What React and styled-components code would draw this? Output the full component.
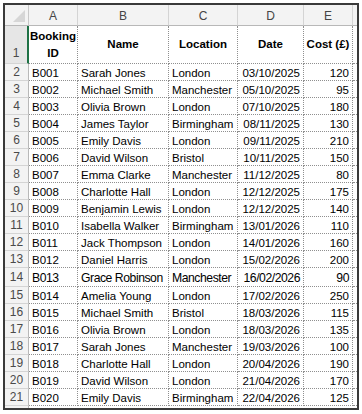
import React from "react";
import styled, { createGlobalStyle } from "styled-components";

const GlobalStyle = createGlobalStyle`
  html, body { margin: 0; padding: 0; background: #ffffff; }
  body { font-family: "Liberation Sans", Arial, sans-serif; }
`;

const COLS = "24px 49px 91px 69px 66px 49px 1fr";

const Frame = styled.div`
  margin: 3px;
  width: 356px;
  height: 407px;
  box-sizing: border-box;
  border: 2px solid #3a3a3a;
  overflow: hidden;
  background: #fff;
`;

const Row = styled.div`
  display: grid;
  grid-template-columns: ${COLS};
  height: ${(p) => p.$h}px;
`;

const Corner = styled.div`
  background: #f3f3f3;
  border-right: 1px solid #c8c8c8;
  border-bottom: 1px solid #b8b8b8;
  box-sizing: border-box;
  display: flex;
  align-items: flex-end;
  justify-content: flex-end;
  padding: 0 3px 3px 0;
`;

const ColHead = styled.div`
  background: #f3f3f3;
  border-right: 1px solid #d4d4d4;
  border-bottom: 1px solid #b8b8b8;
  box-sizing: border-box;
  display: flex;
  align-items: center;
  justify-content: center;
  color: #454545;
  font-size: 12px;
  padding-top: 1px;
`;

const RowHead = styled.div`
  background: ${(p) => (p.$sel ? "#e6e6e6" : "#f3f3f3")};
  border-right: ${(p) => (p.$sel ? "2px solid #1e7145" : "1px solid #b8b8b8")};
  border-bottom: 1px solid #d4d4d4;
  box-sizing: border-box;
  display: flex;
  align-items: ${(p) => (p.$sel ? "flex-end" : "center")};
  justify-content: center;
  color: #4a4a4a;
  font-size: 12px;
  padding-bottom: ${(p) => (p.$sel ? "3px" : "0")};
`;

const Cell = styled.div`
  border-right: 1px dotted #8f8f8f;
  border-bottom: 1px dotted #8f8f8f;
  box-sizing: border-box;
  display: flex;
  align-items: center;
  justify-content: ${(p) => (p.$right ? "flex-end" : "flex-start")};
  padding: 1px ${(p) => (p.$right ? "3px" : "3px")} 0 ${(p) => (p.$right ? "0" : "3px")};
  color: #000;
  font-size: ${(p) => (p.$big ? "12.2px" : "11.5px")};
  letter-spacing: ${(p) => (p.$big ? "-0.45px" : "0")};
  white-space: nowrap;
  overflow: hidden;
`;

const HeadCell = styled(Cell)`
  justify-content: center;
  text-align: center;
  font-weight: 700;
  font-size: 11.5px;
  line-height: 17px;
  padding: 0;
  white-space: normal;
`;

const Stub = styled.div`
  border-bottom: 1px dotted #8f8f8f;
  box-sizing: border-box;
  background: ${(p) => (p.$head ? "#f3f3f3" : "#fff")};
  ${(p) => (p.$head ? "border-bottom: 1px solid #b8b8b8;" : "")}
`;

const data = [
  ["B001", "Sarah Jones", "London", "03/10/2025", 120],
  ["B002", "Michael Smith", "Manchester", "05/10/2025", 95],
  ["B003", "Olivia Brown", "London", "07/10/2025", 180],
  ["B004", "James Taylor", "Birmingham", "08/11/2025", 130],
  ["B005", "Emily Davis", "London", "09/11/2025", 210],
  ["B006", "David Wilson", "Bristol", "10/11/2025", 150],
  ["B007", "Emma Clarke", "Manchester", "11/12/2025", 80],
  ["B008", "Charlotte Hall", "London", "12/12/2025", 175],
  ["B009", "Benjamin Lewis", "London", "12/12/2025", 140],
  ["B010", "Isabella Walker", "Birmingham", "13/01/2026", 110],
  ["B011", "Jack Thompson", "London", "14/01/2026", 160],
  ["B012", "Daniel Harris", "London", "15/02/2026", 200],
  ["B013", "Grace Robinson", "Manchester", "16/02/2026", 90],
  ["B014", "Amelia Young", "London", "17/02/2026", 250],
  ["B015", "Michael Smith", "Bristol", "18/03/2026", 115],
  ["B016", "Olivia Brown", "London", "18/03/2026", 135],
  ["B017", "Sarah Jones", "Manchester", "19/03/2026", 100],
  ["B018", "Charlotte Hall", "London", "20/04/2026", 190],
  ["B019", "David Wilson", "London", "21/04/2026", 170],
  ["B020", "Emily Davis", "Birmingham", "22/04/2026", 125],
];

const CornerTriangle = () => (
  <svg width="12" height="12" viewBox="0 0 12 12">
    <polygon points="12,0 12,12 0,12" fill="#d6d6d6" />
  </svg>
);

export default function App() {
  return (
    <>
      <GlobalStyle />
      <Frame>
        <Row $h={21}>
          <Corner>
            <CornerTriangle />
          </Corner>
          {["A", "B", "C", "D", "E"].map((l) => (
            <ColHead key={l}>{l}</ColHead>
          ))}
          <Stub $head />
        </Row>
        <Row $h={38}>
          <RowHead $sel>1</RowHead>
          <HeadCell>
            Booking
            <br />
            ID
          </HeadCell>
          <HeadCell>Name</HeadCell>
          <HeadCell>Location</HeadCell>
          <HeadCell>Date</HeadCell>
          <HeadCell>Cost (£)</HeadCell>
          <Stub />
        </Row>
        {data.map((r, i) => {
          const big = r[0] === "B013";
          return (
            <Row key={r[0]} $h={big ? 19 : 17}>
              <RowHead>{i + 2}</RowHead>
              <Cell $big={big}>{r[0]}</Cell>
              <Cell $big={big}>{r[1]}</Cell>
              <Cell $big={big}>{r[2]}</Cell>
              <Cell $big={big} $right>
                {r[3]}
              </Cell>
              <Cell $big={big} $right>
                {r[4]}
              </Cell>
              <Stub />
            </Row>
          );
        })}
        <Row $h={17}>
          <RowHead>22</RowHead>
        </Row>
      </Frame>
    </>
  );
}
